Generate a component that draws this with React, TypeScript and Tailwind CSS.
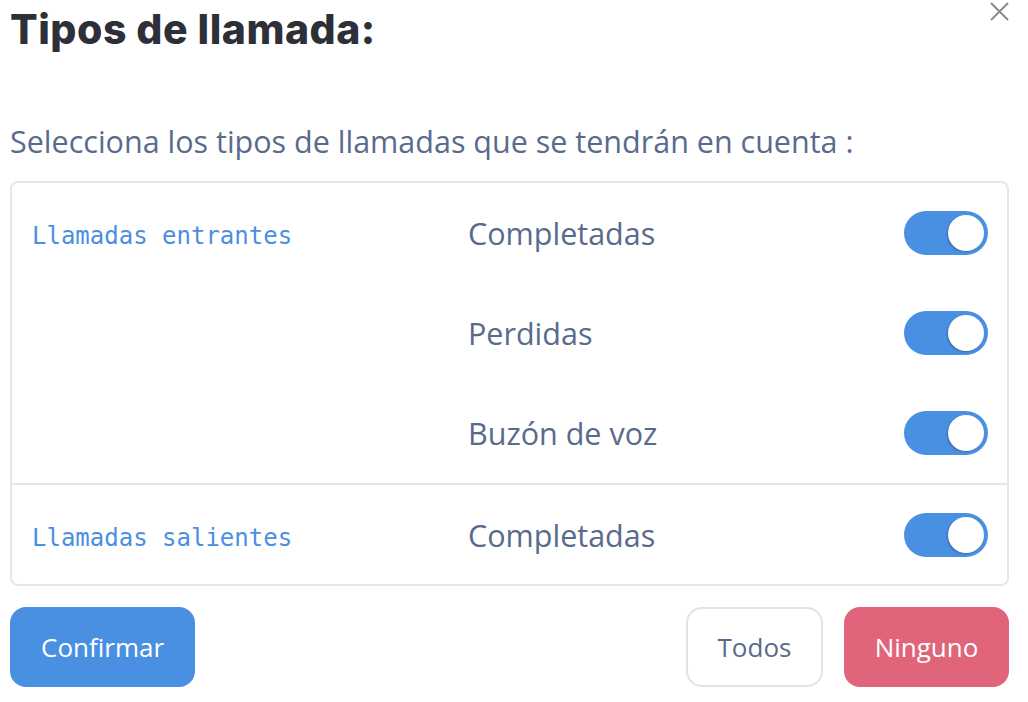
const sections = [
  { label: "Llamadas entrantes", items: ["Completadas", "Perdidas", "Buzón de voz"] },
  { label: "Llamadas salientes", items: ["Completadas"] },
];

function Toggle() {
  return (
    <div className="relative h-[44px] w-[84px] rounded-full bg-[#4a90e2]">
      <div className="absolute right-[4px] top-[4px] h-[36px] w-[36px] rounded-full bg-white shadow-[-1px_1px_2px_rgba(0,0,0,0.25)]" />
    </div>
  );
}

export default function App() {
  return (
    <div className="relative min-h-screen bg-white pl-[10px] pr-[19px] font-['Open_Sans',sans-serif]">
      {/* close */}
      <button className="absolute right-[19px] top-[2px] h-[19px] w-[19px]">
        <svg viewBox="0 0 19 19" className="h-full w-full" fill="none" stroke="#8a8a8a" strokeWidth="2">
          <path d="M1 1 L18 18 M18 1 L1 18" />
        </svg>
      </button>

      <h1 className="pt-[5px] font-['Inter',sans-serif] text-[41px] font-extrabold leading-[48px] tracking-[0.5px] text-[#2e3038]">
        Tipos de llamada:
      </h1>

      <p className="mt-[70px] text-[30.5px] leading-[36px] text-[#596b8c]">
        Selecciona los tipos de llamadas que se tendrán en cuenta :
      </p>

      <div className="mt-[22px] rounded-[8px] border-2 border-[#e6e6e6]">
        {sections.map((section, si) => (
          <div
            key={section.label}
            className={si > 0 ? "border-t-2 border-[#e6e6e6]" : ""}
          >
            {section.items.map((item, i) => (
              <div
                key={item + i}
                className={`flex items-center pl-[20px] pr-[19px] ${si > 0 ? "h-[99px]" : "h-[100px]"}`}
              >
                <div className="w-[436px] pt-[6px] font-['DejaVu_Sans_Mono',monospace] text-[24px] text-[#4a8fe0]">
                  {i === 0 ? section.label : ""}
                </div>
                <div className="flex-1 pt-[2px] text-[30.5px] text-[#596b8c]">{item}</div>
                <Toggle />
              </div>
            ))}
          </div>
        ))}
      </div>

      <div className="mt-[21px] flex items-center">
        <button className="h-[80px] rounded-[16px] bg-[#4a90e2] px-[31px] text-[26px] text-white">
          Confirmar
        </button>
        <div className="ml-auto flex gap-[21px]">
          <button className="h-[80px] w-[137px] rounded-[16px] border-2 border-[#e3e3e3] text-[26px] text-[#596b8c]">
            Todos
          </button>
          <button className="h-[80px] w-[165px] rounded-[16px] bg-[#e0647a] text-[26px] text-white">
            Ninguno
          </button>
        </div>
      </div>
    </div>
  );
}
